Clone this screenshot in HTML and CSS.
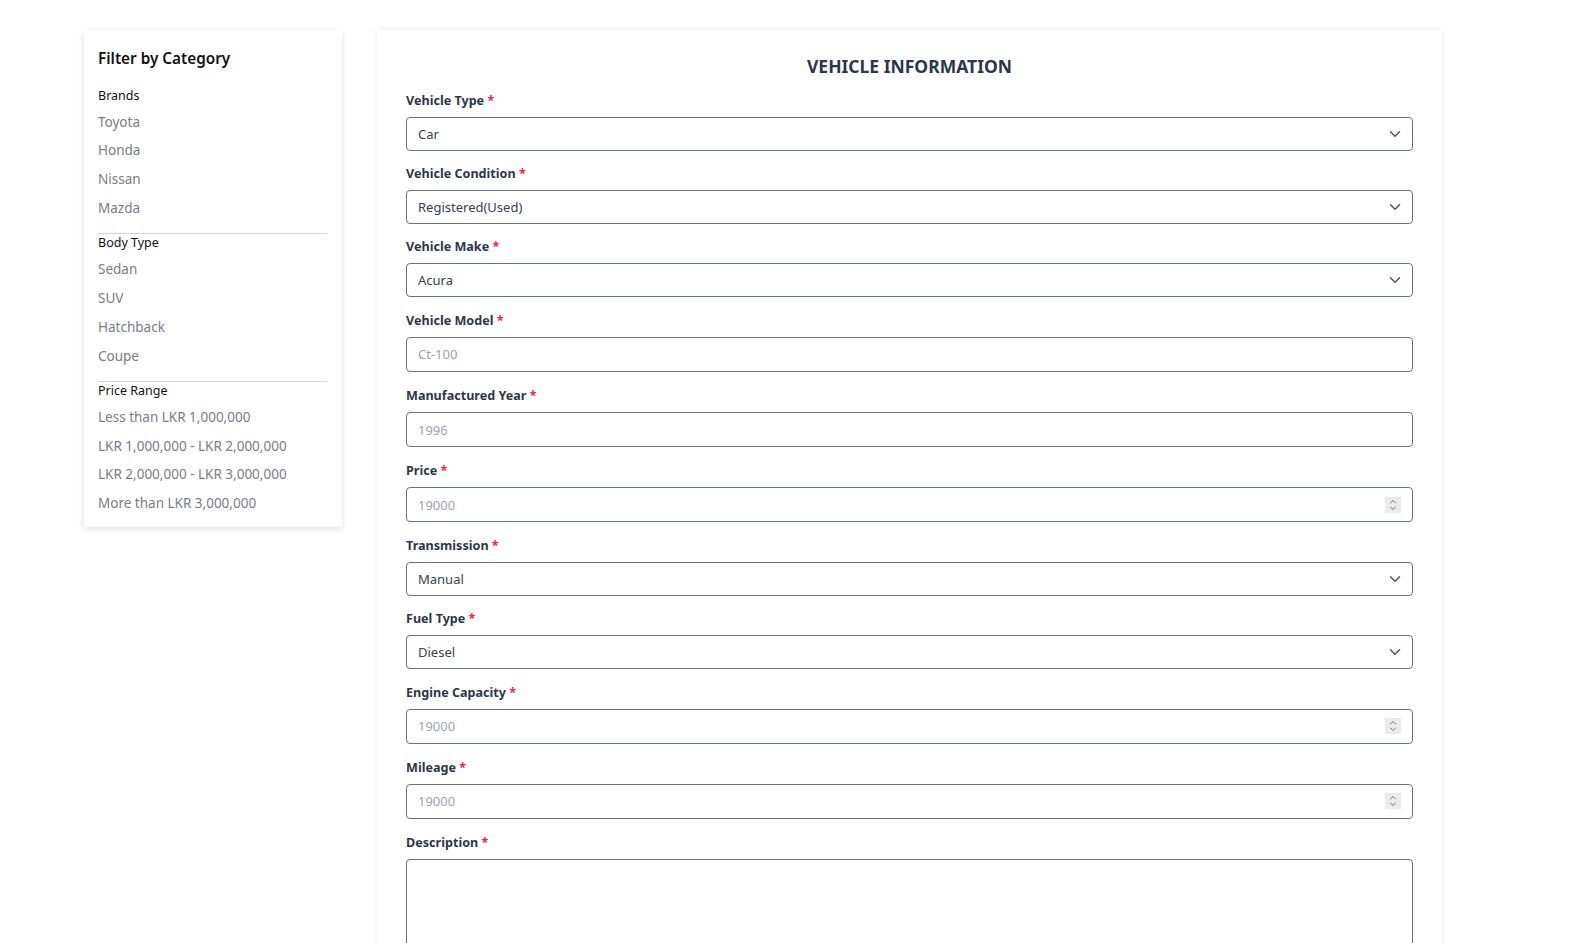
FILE: index.html
```html
<!DOCTYPE html>
<html lang="en">
<head>
<meta charset="utf-8">
<title>Vehicle Information</title>
<link rel="stylesheet" href="styles.css">
</head>
<body>
<div class="page">
  <aside class="sidebar">
    <h2 class="sidebar-title">Filter by Category</h2>
    <div class="filter-group">
      <div class="group-title">Brands</div>
      <div class="filter-item">Toyota</div>
      <div class="filter-item">Honda</div>
      <div class="filter-item">Nissan</div>
      <div class="filter-item">Mazda</div>
    </div>
    <div class="filter-group">
      <div class="group-title">Body Type</div>
      <div class="filter-item">Sedan</div>
      <div class="filter-item">SUV</div>
      <div class="filter-item">Hatchback</div>
      <div class="filter-item">Coupe</div>
    </div>
    <div class="filter-group">
      <div class="group-title">Price Range</div>
      <div class="filter-item">Less than LKR 1,000,000</div>
      <div class="filter-item">LKR 1,000,000 - LKR 2,000,000</div>
      <div class="filter-item">LKR 2,000,000 - LKR 3,000,000</div>
      <div class="filter-item">More than LKR 3,000,000</div>
    </div>
  </aside>

  <main class="form-card">
    <h1 class="form-title">VEHICLE INFORMATION</h1>

    <div class="field">
      <label class="label">Vehicle Type <span class="req">*</span></label>
      <div class="control select-wrap">
        <select class="select"><option>Car</option></select>
        <svg class="chev" width="12" height="8" viewBox="0 0 12 8"><path d="M1.5 1.8 L6 6.2 L10.5 1.8" fill="none" stroke="#4b5563" stroke-width="1.5" stroke-linecap="round" stroke-linejoin="round"/></svg>
      </div>
    </div>

    <div class="field">
      <label class="label">Vehicle Condition <span class="req">*</span></label>
      <div class="control select-wrap">
        <select class="select"><option>Registered(Used)</option></select>
        <svg class="chev" width="12" height="8" viewBox="0 0 12 8"><path d="M1.5 1.8 L6 6.2 L10.5 1.8" fill="none" stroke="#4b5563" stroke-width="1.5" stroke-linecap="round" stroke-linejoin="round"/></svg>
      </div>
    </div>

    <div class="field">
      <label class="label">Vehicle Make <span class="req">*</span></label>
      <div class="control select-wrap">
        <select class="select"><option>Acura</option></select>
        <svg class="chev" width="12" height="8" viewBox="0 0 12 8"><path d="M1.5 1.8 L6 6.2 L10.5 1.8" fill="none" stroke="#4b5563" stroke-width="1.5" stroke-linecap="round" stroke-linejoin="round"/></svg>
      </div>
    </div>

    <div class="field">
      <label class="label">Vehicle Model <span class="req">*</span></label>
      <div class="control">
        <input class="input" type="text" placeholder="Ct-100">
      </div>
    </div>

    <div class="field">
      <label class="label">Manufactured Year <span class="req">*</span></label>
      <div class="control">
        <input class="input" type="text" placeholder="1996">
      </div>
    </div>

    <div class="field">
      <label class="label">Price <span class="req">*</span></label>
      <div class="control number-wrap">
        <input class="input" type="number" placeholder="19000">
        <span class="spin"><svg width="8" height="12" viewBox="0 0 8 12"><path d="M1.5 4 L4 1.5 L6.5 4 M1.5 8 L4 10.5 L6.5 8" fill="none" stroke="#6b7280" stroke-width="1" stroke-linecap="round" stroke-linejoin="round"/></svg></span>
      </div>
    </div>

    <div class="field">
      <label class="label">Transmission <span class="req">*</span></label>
      <div class="control select-wrap">
        <select class="select"><option>Manual</option></select>
        <svg class="chev" width="12" height="8" viewBox="0 0 12 8"><path d="M1.5 1.8 L6 6.2 L10.5 1.8" fill="none" stroke="#4b5563" stroke-width="1.5" stroke-linecap="round" stroke-linejoin="round"/></svg>
      </div>
    </div>

    <div class="field">
      <label class="label">Fuel Type <span class="req">*</span></label>
      <div class="control select-wrap">
        <select class="select"><option>Diesel</option></select>
        <svg class="chev" width="12" height="8" viewBox="0 0 12 8"><path d="M1.5 1.8 L6 6.2 L10.5 1.8" fill="none" stroke="#4b5563" stroke-width="1.5" stroke-linecap="round" stroke-linejoin="round"/></svg>
      </div>
    </div>

    <div class="field">
      <label class="label">Engine Capacity <span class="req">*</span></label>
      <div class="control number-wrap">
        <input class="input" type="number" placeholder="19000">
        <span class="spin"><svg width="8" height="12" viewBox="0 0 8 12"><path d="M1.5 4 L4 1.5 L6.5 4 M1.5 8 L4 10.5 L6.5 8" fill="none" stroke="#6b7280" stroke-width="1" stroke-linecap="round" stroke-linejoin="round"/></svg></span>
      </div>
    </div>

    <div class="field">
      <label class="label">Mileage <span class="req">*</span></label>
      <div class="control number-wrap">
        <input class="input" type="number" placeholder="19000">
        <span class="spin"><svg width="8" height="12" viewBox="0 0 8 12"><path d="M1.5 4 L4 1.5 L6.5 4 M1.5 8 L4 10.5 L6.5 8" fill="none" stroke="#6b7280" stroke-width="1" stroke-linecap="round" stroke-linejoin="round"/></svg></span>
      </div>
    </div>

    <div class="field">
      <label class="label">Description <span class="req">*</span></label>
      <div class="control">
        <textarea class="textarea"></textarea>
      </div>
    </div>
  </main>
</div>
</body>
</html>
```

FILE: styles.css
```css
* {
  box-sizing: border-box;
}

body {
  margin: 0;
  background: #ffffff;
  font-family: "Noto Sans", "Open Sans", "Liberation Sans", sans-serif;
  color: #1f2937;
}

.page {
  display: flex;
  align-items: flex-start;
  gap: 35px;
  padding: 30px 0 0 84px;
}

/* Sidebar */
.sidebar {
  width: 258px;
  flex: none;
  background: #fff;
  box-shadow: 0 2px 6px rgba(0, 0, 0, 0.13);
  padding: 16px 15px 9px 14px;
}

.sidebar-title {
  margin: 0 0 16.5px;
  font-size: 15.3px;
  line-height: 24px;
  font-weight: 600;
  color: #111;
}

.filter-group + .filter-group {
  border-top: 1px solid #d4d4d8;
  margin-top: 10.5px;
}

.group-title {
  font-size: 12.5px;
  line-height: 18px;
  color: #111;
  margin-bottom: 3px;
}

.filter-item {
  font-size: 13.5px;
  line-height: 28.8px;
  color: #7a7d86;
}

/* Main form */
.form-card {
  width: 1065px;
  flex: none;
  background: #fff;
  box-shadow: 0 0 6px rgba(0, 0, 0, 0.09);
  padding: 23px 29px 40px;
  min-height: 1100px;
}

.form-title {
  margin: 0 0 12px;
  text-align: center;
  font-size: 17.5px;
  line-height: 26px;
  font-weight: 700;
  color: #2d3748;
}

.field {
  margin-bottom: 13.7px;
}

.label {
  display: block;
  font-size: 12.6px;
  line-height: 20px;
  font-weight: 700;
  color: #2d3748;
  margin-bottom: 6px;
}

.req {
  color: #e8284f;
}

.control {
  position: relative;
}

.select,
.input,
.textarea {
  display: block;
  width: 100%;
  margin: 0;
  border: 1px solid #6b7280;
  border-radius: 4px;
  background: #fff;
  font-family: inherit;
  font-size: 13px;
  color: #374151;
  padding: 0 11px;
  outline: none;
}

.select {
  height: 33.5px;
  -webkit-appearance: none;
  appearance: none;
}

.input {
  height: 35.5px;
}

.input::placeholder {
  color: #9ca3af;
}

.input[type="number"] {
  -moz-appearance: textfield;
}

.input::-webkit-inner-spin-button,
.input::-webkit-outer-spin-button {
  -webkit-appearance: none;
  margin: 0;
}

.textarea {
  height: 160px;
  resize: none;
}

.chev {
  position: absolute;
  right: 12px;
  top: 50%;
  margin-top: -4px;
  pointer-events: none;
}

.spin {
  position: absolute;
  right: 12px;
  top: 50%;
  margin-top: -8px;
  width: 16px;
  height: 16px;
  background: #ebebef;
  display: flex;
  align-items: center;
  justify-content: center;
  pointer-events: none;
}
```
